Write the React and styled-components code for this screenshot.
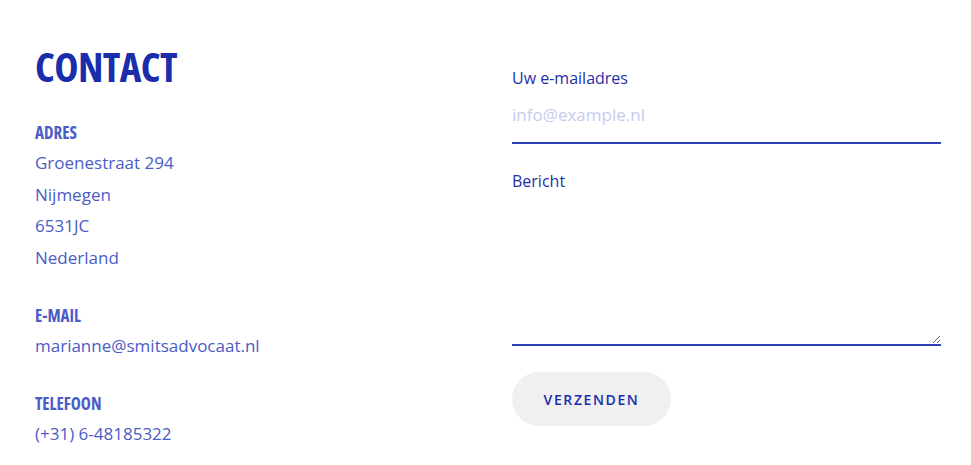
import styled, { createGlobalStyle } from "styled-components";

const GlobalStyle = createGlobalStyle`
  html, body {
    margin: 0;
    padding: 0;
    background: #fff;
  }
  body {
    font-family: "Open Sans", "Liberation Sans", sans-serif;
  }
`;

const Page = styled.div`
  display: grid;
  grid-template-columns: 429px 429px;
  column-gap: 48px;
  padding: 38px 0 0 35px;
`;

const Info = styled.section`
  display: flex;
  flex-direction: column;
`;

const Title = styled.h1`
  margin: 0 0 25px;
  font-family: "Open Sans", "DejaVu Sans", sans-serif;
  font-stretch: 75%;
  font-weight: 700;
  font-size: 41px;
  line-height: 56px;
  letter-spacing: -0.6px;
  color: #1a2dab;
`;

const Block = styled.div`
  margin-bottom: 28px;
`;

const Label = styled.h3`
  margin: 0;
  font-family: "Open Sans", "DejaVu Sans", sans-serif;
  font-stretch: 75%;
  font-weight: 700;
  font-size: 17px;
  line-height: 28px;
  color: #4a5cc6;
`;

const Line = styled.div`
  font-size: 17px;
  line-height: 31.7px;
  color: #4a5cc6;
`;

const Form = styled.form`
  display: flex;
  flex-direction: column;
  padding-top: 29px;
`;

const FieldLabel = styled.label`
  font-size: 16px;
  line-height: 22px;
  color: #1f30a6;
`;

const Input = styled.input`
  border: none;
  border-bottom: 2px solid #2941b5;
  outline: none;
  padding: 0 0 2px;
  height: 55px;
  box-sizing: border-box;
  font-family: inherit;
  font-size: 17px;
  color: #1f30a6;
  margin-bottom: 26px;
  &::placeholder {
    color: #c5cbee;
  }
`;

const TextArea = styled.textarea`
  border: none;
  border-bottom: 2px solid #2941b5;
  outline: none;
  padding: 0;
  height: 154px;
  box-sizing: border-box;
  font-family: inherit;
  font-size: 17px;
  color: #1f30a6;
  resize: vertical;
`;

const Button = styled.button`
  align-self: flex-start;
  margin-top: 26px;
  width: 159px;
  height: 54px;
  border: none;
  border-radius: 27px;
  background: #f0f0f0;
  font-family: "Open Sans", sans-serif;
  font-weight: 600;
  font-size: 14px;
  letter-spacing: 1.6px;
  color: #1a2dab;
  cursor: pointer;
`;

const contact = [
  { label: "ADRES", lines: ["Groenestraat 294", "Nijmegen", "6531JC", "Nederland"] },
  { label: "E-MAIL", lines: ["marianne@smitsadvocaat.nl"] },
  { label: "TELEFOON", lines: ["(+31) 6-48185322"] },
];

export default function App() {
  return (
    <>
      <GlobalStyle />
      <Page>
        <Info>
          <Title>CONTACT</Title>
          {contact.map((c) => (
            <Block key={c.label}>
              <Label>{c.label}</Label>
              {c.lines.map((l) => (
                <Line key={l}>{l}</Line>
              ))}
            </Block>
          ))}
        </Info>
        <Form onSubmit={(e) => e.preventDefault()}>
          <FieldLabel htmlFor="email">Uw e-mailadres</FieldLabel>
          <Input id="email" type="email" placeholder="info@example.nl" />
          <FieldLabel htmlFor="msg">Bericht</FieldLabel>
          <TextArea id="msg" />
          <Button type="submit">VERZENDEN</Button>
        </Form>
      </Page>
    </>
  );
}
